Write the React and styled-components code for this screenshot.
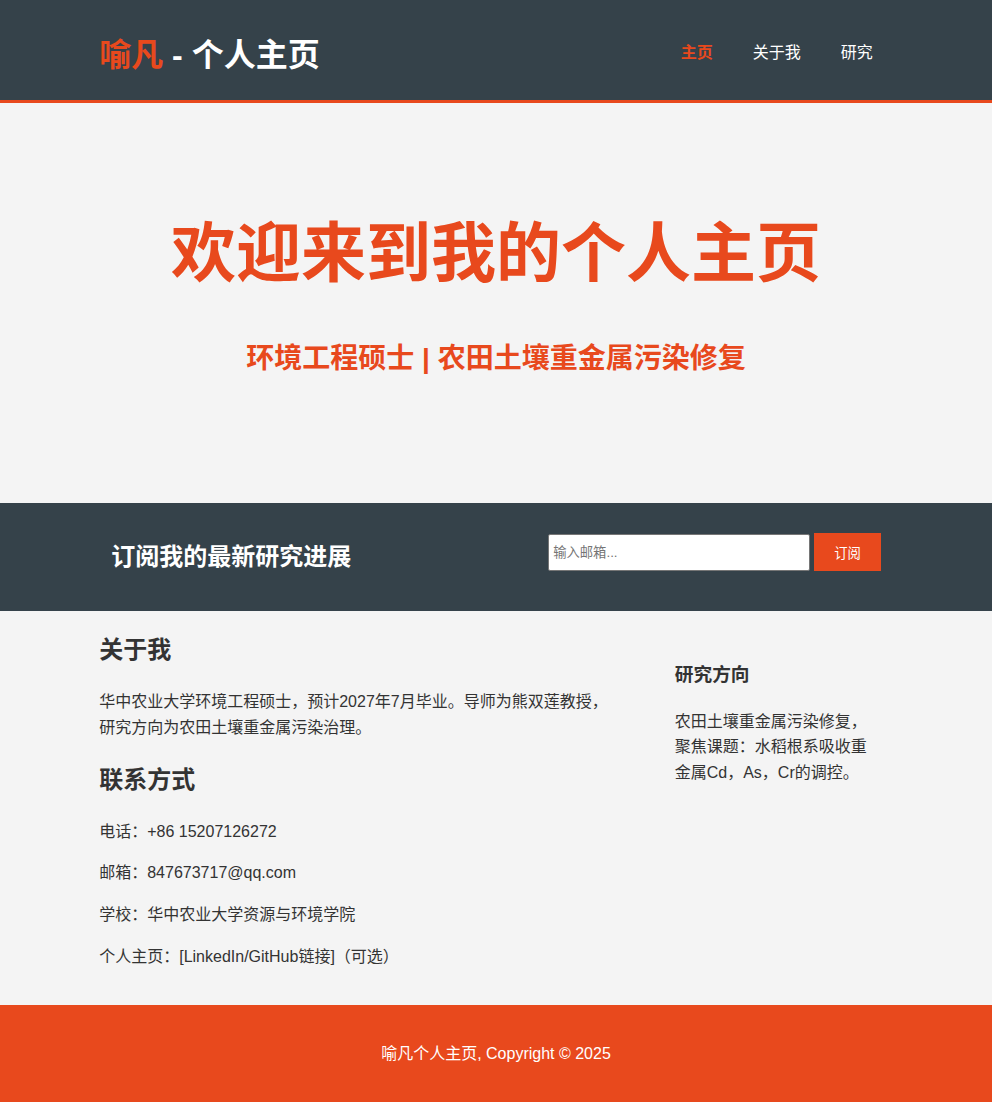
import React from "react";
import styled, { createGlobalStyle } from "styled-components";

const ORANGE = "#e8491d";
const DARK = "#35424a";

const GlobalStyle = createGlobalStyle`
  body {
    margin: 0;
    padding: 0;
    background-color: #f4f4f4;
    color: #333;
    font-family: "Liberation Sans", Arial, "Noto Sans CJK SC", sans-serif;
    font-size: 16px;
    line-height: 1.6;
  }
`;

const Container = styled.div`
  width: 80%;
  margin: auto;
  overflow: hidden;
  display: flex;
  justify-content: space-between;
  align-items: flex-start;
`;

// HEADER
const Header = styled.header`
  background: ${DARK};
  color: #fff;
  padding-top: 30px;
  min-height: 70px;
  border-bottom: 3px solid ${ORANGE};
`;

const Branding = styled.h1`
  margin: 0;
  font-size: 32px;
  font-weight: bold;
  line-height: 1.6;
`;

const Highlight = styled.span`
  color: ${ORANGE};
`;

const Nav = styled.ul`
  display: flex;
  list-style: none;
  margin: 10px 0 0;
  padding: 0;
`;

const NavItem = styled.li`
  padding: 0 20px;
  a {
    color: ${(p) => (p.$current ? ORANGE : "#fff")};
    font-weight: ${(p) => (p.$current ? "bold" : "normal")};
    text-decoration: none;
    font-size: 16px;
  }
`;

// SHOWCASE
const Showcase = styled.section`
  min-height: 400px;
  text-align: center;
  color: ${ORANGE};
  overflow: hidden;

  h1 {
    margin: 100px 0 0;
    font-size: 65px;
    line-height: 102px;
  }
  h2 {
    margin: 32px 0 0;
    font-size: 28px;
    line-height: 1.6;
  }
`;

// NEWSLETTER
const Newsletter = styled.section`
  padding: 15px;
  color: #fff;
  background: ${DARK};
`;

const NewsTitle = styled.h2`
  margin: 19.92px 0;
  font-size: 24px;
  line-height: 1.6;
`;

const Form = styled.form`
  display: flex;
  align-items: center;
  gap: 4px;
  margin-top: 15px;
`;

const EmailInput = styled.input`
  padding: 4px;
  height: 27px;
  width: 252px;
  border: 1px solid #767676;
  border-radius: 2px;
  font-family: "Liberation Sans", Arial, "Noto Sans CJK SC", sans-serif;
  font-size: 13.33px;
  &::placeholder {
    color: #757575;
  }
`;

const Button = styled.button`
  height: 38px;
  background: ${ORANGE};
  border: 0;
  padding: 0 20px;
  color: #fff;
  font-family: "Liberation Sans", Arial, "Noto Sans CJK SC", sans-serif;
  font-size: 13.33px;
`;

// MAIN
const MainCol = styled.article`
  width: 65%;
  h2 {
    font-size: 24px;
    margin: 19.92px 0;
  }
  p {
    margin: 16px 0;
  }
`;

const Sidebar = styled.aside`
  width: 30%;
  margin-top: 10px;
  padding: 20px;
  box-sizing: border-box;
  h3 {
    font-size: 18.72px;
    margin: 18.72px 0;
  }
  p {
    margin: 16px 0;
  }
`;

const Footer = styled.footer`
  padding: 20px;
  margin-top: 20px;
  color: #fff;
  background-color: ${ORANGE};
  text-align: center;
  p {
    margin: 16px 0;
  }
`;

export default function App() {
  return (
    <>
      <GlobalStyle />
      <Header>
        <Container>
          <Branding>
            <Highlight>喻凡</Highlight> - 个人主页
          </Branding>
          <nav>
            <Nav>
              <NavItem $current>
                <a href="#">主页</a>
              </NavItem>
              <NavItem>
                <a href="#">关于我</a>
              </NavItem>
              <NavItem>
                <a href="#">研究</a>
              </NavItem>
            </Nav>
          </nav>
        </Container>
      </Header>

      <Showcase>
        <h1>欢迎来到我的个人主页</h1>
        <h2>环境工程硕士 | 农田土壤重金属污染修复</h2>
      </Showcase>

      <Newsletter>
        <Container>
          <NewsTitle>订阅我的最新研究进展</NewsTitle>
          <Form onSubmit={(e) => e.preventDefault()}>
            <EmailInput type="email" placeholder="输入邮箱..." />
            <Button type="submit">订阅</Button>
          </Form>
        </Container>
      </Newsletter>

      <section>
        <Container>
          <MainCol>
            <h2>关于我</h2>
            <p>
              华中农业大学环境工程硕士，预计2027年7月毕业。导师为熊双莲教授，研究方向为农田土壤重金属污染治理。
            </p>
            <h2>联系方式</h2>
            <p>电话：+86 15207126272</p>
            <p>邮箱：847673717@qq.com</p>
            <p>学校：华中农业大学资源与环境学院</p>
            <p>个人主页：[LinkedIn/GitHub链接]（可选）</p>
          </MainCol>
          <Sidebar>
            <h3>研究方向</h3>
            <p>农田土壤重金属污染修复，聚焦课题：水稻根系吸收重金属Cd，As，Cr的调控。</p>
          </Sidebar>
        </Container>
      </section>

      <Footer>
        <p>喻凡个人主页, Copyright © 2025</p>
      </Footer>
    </>
  );
}
